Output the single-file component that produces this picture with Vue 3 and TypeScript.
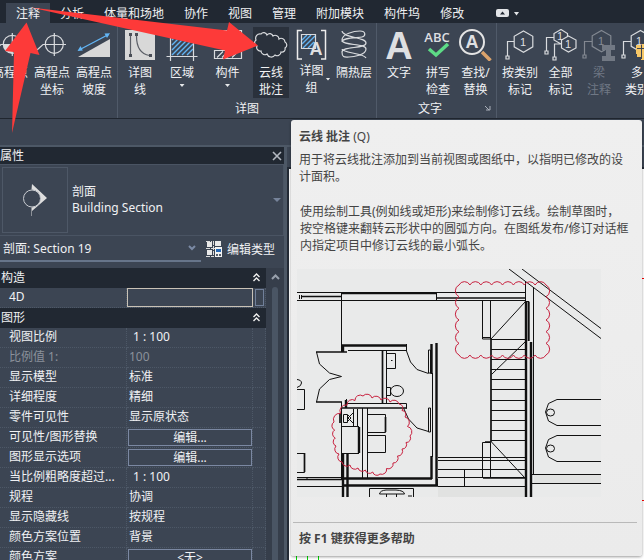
<script setup lang="ts">
import { ref } from 'vue'

interface PropertyRow {
  name: string
  value: string
  kind?: 'text' | 'muted' | 'ratio' | 'button'
}

type Point = [number, number]

const menus: string[] = ['注释', '分析', '体量和场地', '协作', '视图', '管理', '附加模块', '构件坞', '修改']
const activeMenu = ref('注释')
const fourD = ref('')

const rows: PropertyRow[] = [
  { name: '视图比例', value: '1 : 100', kind: 'ratio' },
  { name: '比例值 1:', value: '100', kind: 'muted' },
  { name: '显示模型', value: '标准' },
  { name: '详细程度', value: '精细' },
  { name: '零件可见性', value: '显示原状态' },
  { name: '可见性/图形替换', value: '编辑...', kind: 'button' },
  { name: '图形显示选项', value: '编辑...', kind: 'button' },
  { name: '当比例粗略度超过...', value: '1 : 100', kind: 'ratio' },
  { name: '规程', value: '协调' },
  { name: '显示隐藏线', value: '按规程' },
  { name: '颜色方案位置', value: '背景' },
  { name: '颜色方案', value: '<无>', kind: 'button' },
]

// Clockwise outline turned into a chain of outward bumps.
function revisionCloud(points: Point[], step: number): string {
  let d = `M${points[0][0]} ${points[0][1]}`
  points.forEach(([x1, y1], i) => {
    const [x2, y2] = points[(i + 1) % points.length]
    const length = Math.hypot(x2 - x1, y2 - y1)
    const count = Math.max(1, Math.round(length / step))
    const radius = ((length / count) * 0.56).toFixed(1)
    for (let n = 1; n <= count; n++) {
      const x = (x1 + ((x2 - x1) * n) / count).toFixed(1)
      const y = (y1 + ((y2 - y1) * n) / count).toFixed(1)
      d += `A${radius} ${radius} 0 0 1 ${x} ${y}`
    }
  })
  return d + 'Z'
}

const stairCloud = revisionCloud([[162, 16], [249, 16], [249, 86], [162, 86]], 11.5)
const roomCloud = revisionCloud(
  [[66, 127], [84, 131], [102, 135], [108, 148], [113, 167], [105, 180], [96, 194], [83, 205], [61, 199], [45, 193], [39, 177], [37, 153], [50, 136]],
  9,
)
const cloudIcon = revisionCloud(
  [[3, 11], [8, 5], [14, 6], [20, 7], [26, 10], [32, 13], [32, 19], [28, 23], [22, 26], [14, 25], [8, 22], [4, 17]],
  9,
)
const treads: number[] = [70, 80, 90, 100, 110, 120, 131, 141, 151, 161, 171]
</script>

<template>
  <div class="app">
    <nav class="menubar">
      <button
        v-for="menu in menus"
        :key="menu"
        type="button"
        class="menu"
        :class="{ active: menu === activeMenu }"
        @click="activeMenu = menu"
      >{{ menu }}</button>
      <button type="button" class="collapse" aria-label="最小化功能区">
        <svg width="24" height="10" viewBox="0 0 24 10">
          <rect x="0" y="1" width="13" height="8" rx="2" fill="#e3e5e8" />
          <path d="M4 6.500h5L6.500 3.500z" fill="#212832" />
          <path d="M18 4h5l-2.500 3.500z" fill="#e3e5e8" />
        </svg>
      </button>
    </nav>

    <header class="ribbon">
      <section class="group elevation">
        <div class="tools">
          <button type="button" class="tool w42">
            <svg class="icon" viewBox="0 0 36 32">
              <path d="M20.300 15.300V24.300A9 9 0 0 1 11.300 15.300z" fill="#dcdcdc" />
              <path class="ln" d="M3 21l6-5.500h23M20.300 4v23" /><circle class="ln" cx="20.300" cy="15.300" r="9" />
            </svg>
            <span>高程点</span>
          </button>
          <button type="button" class="tool w42">
            <svg class="icon" viewBox="0 0 36 32">
              <path class="ln" d="M3 21l6-5.500h23M20.300 4v23" /><circle class="ln" cx="20.300" cy="15.300" r="9" />
            </svg>
            <span>高程点<br />坐标</span>
          </button>
          <button type="button" class="tool w42">
            <svg class="icon" viewBox="0 0 36 32">
              <path d="M2 28L34 10V28z" fill="#d8d8d8" />
              <path d="M3 21L32.500 5.500" stroke="#62b5f5" stroke-width="1.400" />
              <path d="M1.500 22l3-5 2.300 4.600zM34 4.300l-5.500.3 2.500 4.400z" fill="#62b5f5" />
            </svg>
            <span>高程点<br />坡度</span>
          </button>
        </div>
      </section>

      <section class="group detail">
        <div class="tools">
          <button type="button" class="tool w44">
            <svg class="icon" viewBox="0 0 36 32">
              <path d="M3 1h30v30H3z" fill="#d8d8d8" />
              <path d="M8.500 7v18M14.500 7c0 11 4 18 13 19.500" fill="none" stroke="#5a5e66" stroke-width="1.200" />
              <path d="M7 4h3v3H7zM13 4h3v3h-3zM7 25h3v3H7zM27 25h3v3h-3z" fill="#4a4e57" />
            </svg>
            <span>详图<br />线</span>
          </button>
          <button type="button" class="tool w40">
            <svg class="icon" viewBox="0 0 36 32">
              <path d="M8 11l4-4M8 16l9-9M8 21L22 7M8 26L27 7M13 26L29 10M18 26l11-11M23 26l6-6" stroke="#62b5f5" stroke-width="1.400" />
              <path class="ln" d="M6.500 2v30M29.500 2v30M2.500 27.500h31M2.500 5.500h31" />
            </svg>
            <span>区域</span><i class="caret"></i>
          </button>
          <button type="button" class="tool w51">
            <svg class="icon" viewBox="0 0 36 32">
              <path class="ln" d="M4.500 21.500h27v8h-27zM4.500 1.500h27v8h-27zM7 28.500l6-6M12 28.500l6-6M17 28.500l6-6M22 28.500l6-6" />
            </svg>
            <span>构件</span><i class="caret"></i>
          </button>
          <button type="button" class="tool w36 hover">
            <svg class="icon" viewBox="0 0 36 32"><path class="ln" :d="cloudIcon" /></svg>
            <span>云线<br />批注</span>
          </button>
          <button type="button" class="tool w45">
            <svg class="icon" viewBox="0 0 36 32">
              <path d="M8 11l5-5M8 15l9-9M9 19L21 7M14 19l6-6" stroke="#62b5f5" stroke-width="1.400" />
              <path class="ln" d="M7.500 5.500h14v14h-14z" />
              <path d="M8 1.500H3.500v28.500H8M27 1.500h4.500v28.500H27" fill="none" stroke="#ececec" stroke-width="1.500" />
              <text x="22" y="26" class="glyph a-small">A</text>
            </svg>
            <span class="with-caret"><span>详图<br />组</span><i class="caret"></i></span>
          </button>
          <button type="button" class="tool w40">
            <svg class="icon" viewBox="0 0 36 32">
              <path class="ln" d="M6 2C7 9 30 8 30 14S6 17 6 23S9 28 13 28S30 26 30 20S6 17 6 11S18 2 24 2S30 7 26 8S6 8 6 13M6 20C6 24 28 24 30 29" />
            </svg>
            <span>隔热层</span>
          </button>
        </div>
        <h2>详图</h2>
      </section>

      <section class="group text">
        <div class="tools">
          <button type="button" class="tool w44">
            <svg class="icon" viewBox="0 0 36 32"><text x="18" y="30" class="glyph a-large">A</text></svg>
            <span>文字</span>
          </button>
          <button type="button" class="tool w34">
            <svg class="icon" viewBox="0 0 36 32">
              <text x="17" y="13" class="glyph abc">ABC</text>
              <path d="M9 20l7 6L28 15" fill="none" stroke="#5ddb86" stroke-width="3.500" />
            </svg>
            <span>拼写<br />检查</span>
          </button>
          <button type="button" class="tool w41">
            <svg class="icon" viewBox="0 0 36 32">
              <path d="M24 23l8.500 8.500" stroke="#dca36c" stroke-width="3.500" />
              <circle cx="14" cy="13" r="12" fill="none" stroke="#e4e4e4" stroke-width="2" />
              <text x="14" y="19" class="glyph a-small">A</text>
            </svg>
            <span>查找/<br />替换</span>
          </button>
        </div>
        <h2>
          <span>文字</span>
          <svg width="6" height="6" viewBox="0 0 6 6"><path d="M0 1l4 4M5 1v4H1" fill="none" stroke="#aab0ba" /></svg>
        </h2>
      </section>

      <section class="group tag">
        <div class="tools">
          <button type="button" class="tool w42">
            <svg class="icon" viewBox="0 0 36 32">
              <path class="ln" d="M21.500 2l9.300 5.300v10.500l-9.300 5.400-9.300-5.400V7.300zM12 12.500H5.500V27M4 27h3v3H4z" />
              <text x="21" y="17" class="glyph one">1</text>
            </svg>
            <span>按类别<br />标记</span>
          </button>
          <button type="button" class="tool w39">
            <svg class="icon" viewBox="0 0 36 32">
              <path class="ln" d="M18 15l-7-4V4.500l7-4 6.500 4V7M25.500 7l7.500 4v8l-7.500 4-7-4v-8zM11 8.500H3.500V22M2 22h3v3H2zM18 15h-6.500v13M10 28h3v3h-3z" />
              <text x="17" y="11" class="glyph one">1</text><text x="25" y="19" class="glyph one">1</text>
            </svg>
            <span>全部<br />标记</span>
          </button>
          <button type="button" class="tool w38 disabled" disabled>
            <svg class="icon" viewBox="0 0 36 32">
              <path class="ln" d="M20.500 1.500l9.300 5.300v10.500l-9.300 5.400-9.300-5.400V6.800zM11 12.500H3.500V26M2 26h3v3H2z" />
              <text x="20" y="16" class="glyph one">1</text>
              <path d="M21 16h13v5h-4v6h4v5H21v-5h4v-6h-4z" fill="#b4b9c1" />
            </svg>
            <span>梁<br />注释</span>
          </button>
          <button type="button" class="tool w38">
            <svg class="icon" viewBox="0 0 36 32">
              <path class="ln" d="M21.500 1.500l9.300 5.300v10.500l-9.300 5.400-9.300-5.400V6.800zM12 12.500H4.500V26M3 26h3v3H3z" />
              <text x="20" y="16" class="glyph one">1</text>
              <path d="M17 16h5v3h-4v6h-1zM23 15h9v4h-9zM18 20h4v8h-4zM22 20h12v11H22z" fill="#f7c766" />
              <path d="M22.500 20v10M22 19.500h10" stroke="#3c4553" />
            </svg>
            <span>多<br />类别</span>
          </button>
        </div>
      </section>
    </header>
    <div class="options"></div>

    <main class="workspace">
      <aside class="palette">
        <div class="palette-title">
          <span>属性</span>
          <button type="button" aria-label="关闭">
            <svg width="10" height="10" viewBox="0 0 10 10"><path d="M1 1l8 8M9 1L1 9" stroke="#b4b9c1" stroke-width="1.600" /></svg>
          </button>
        </div>

        <button type="button" class="type-selector">
          <span class="preview">
            <svg width="24" height="32" viewBox="0 0 24 32">
              <path d="M9 0L24 14L9 27V32H8.500V23.500A9 9 0 0 0 8.500 5.500z" fill="#dedede" />
              <circle cx="9" cy="14.500" r="8.500" fill="#3c4553" stroke="#c9ccd1" />
            </svg>
          </span>
          <span class="type-name">剖面<br />Building Section</span>
          <svg width="8" height="4" viewBox="0 0 8 4"><path d="M0 0h8L4 4z" fill="#76839a" /></svg>
        </button>

        <div class="instance">
          <div class="picker">
            <select aria-label="实例">
              <option>剖面: Section 19</option>
            </select>
            <svg width="8" height="6" viewBox="0 0 8 6"><path d="M1 1l3 3 3-3" fill="none" stroke="#7b8aa5" stroke-width="2" /></svg>
          </div>
          <button type="button" class="edit-type">
            <svg width="16" height="16" viewBox="0 0 16 16">
              <path d="M1 1h5v5H1zM1 9h5v5H1zM9 0h6v5H9z" fill="#e9e9e9" />
              <path d="M0 7.500h16M7.500 0v16M0 15.500h7M0 .5h6" stroke="#dcdcdc" stroke-dasharray="4 1" />
              <path d="M9 6h7v10H9z" fill="#f2f2f2" />
              <path d="M10 8h5v3h-5z" fill="#2669b5" />
              <path d="M10 13h2v2h-2zM13 13h2v2h-2z" fill="#59606c" />
            </svg>
            编辑类型
          </button>
        </div>

        <div class="sheet">
          <table>
            <colgroup><col class="c-name" /><col class="c-value" /><col class="c-link" /></colgroup>
            <tbody>
              <tr class="category">
                <th colspan="3"><div>构造<svg width="7" height="9" viewBox="0 0 7 9"><path d="M.5 4L3.500 1l3 3M.5 8l3-3 3 3" fill="none" stroke="#f0f0f0" stroke-width="1.400" /></svg></div></th>
              </tr>
              <tr>
                <td class="name"><label for="four-d">4D</label></td>
                <td><input id="four-d" v-model="fourD" type="text" /></td>
                <td><button type="button" class="link" aria-label="关联参数"></button></td>
              </tr>
              <tr class="category">
                <th colspan="3"><div>图形<svg width="7" height="9" viewBox="0 0 7 9"><path d="M.5 4L3.500 1l3 3M.5 8l3-3 3 3" fill="none" stroke="#f0f0f0" stroke-width="1.400" /></svg></div></th>
              </tr>
              <tr v-for="row in rows" :key="row.name" :class="row.kind">
                <td class="name">{{ row.name }}</td>
                <td class="value">
                  <button v-if="row.kind === 'button'" type="button" class="edit">{{ row.value }}</button>
                  <template v-else>{{ row.value }}</template>
                </td>
                <td></td>
              </tr>
            </tbody>
          </table>
          <div class="scrollbar">
            <svg width="9" height="6" viewBox="0 0 9 6"><path d="M1 5l3.500-3.500L8 5" fill="none" stroke="#98a0ac" stroke-width="2" /></svg>
            <div class="thumb"></div>
          </div>
        </div>
      </aside>

      <section class="canvas">
        <div class="tabs"></div>
        <div class="sheet-view">
          <i class="red"></i><i class="red"></i>
          <div class="greens"><i></i><i></i><i></i></div>
        </div>
      </section>
    </main>

    <div class="tooltip" role="tooltip">
      <h3>云线 批注 <span>(Q)</span></h3>
      <p>用于将云线批注添加到当前视图或图纸中，以指明已修改的设<br />计面积。</p>
      <p class="more">使用绘制工具(例如线或矩形)来绘制修订云线。绘制草图时，<br />按空格键来翻转云形状中的圆弧方向。在图纸发布/修订对话框<br />内指定项目中修订云线的最小弧长。</p>
      <svg class="plan" width="304" height="228" viewBox="0 0 304 228">
        <path d="M0 0H304V228H0z" fill="#e9eaea" />
        <path d="M141 218h87v10h-87zM237 206h67v8h-67z" fill="#e1e2e1" />
        <g class="thin">
          <path d="M0 23.500H228M0 31.500H228M44.500 23V83M139.500 24V31M2.500 26v4M4.500 26v4M51 81.500H110M109.500 75V82M141 188.500H228M141 191.500H228M141 200.500H228M141 208.500H228M141 217.500H228M167.500 200V217" />
          <path d="M19.500 83L22.500 95L32.500 104L44.500 107.500L32.500 110.500L22.500 120L19.500 133M0 110.500Q4.500 111 4.500 114T0 118.500" />
          <path d="M89.500 81V134M89.500 84.500h9v15h-9zM94 91.500h1.500M89.500 118.500h4v8h-4zM109.500 82L113.500 93L120 100.500L131.500 104.500M131.500 81h2v23h-2zM106.500 139L111.500 150L120 159L131.500 162.500M131.500 139h2v24h-2z" />
          <ellipse cx="100" cy="122" rx="6.500" ry="5.500" />
          <path d="M49.500 130V134.500H109.500V139.500M44.500 133V210M65.500 139V210M70.500 139V210M45 157.500H62M45 184.500H62M56.500 140v17M60.500 140v17M0 120.500H7.500V140.500H0M0 184.500H7.500V203.500H0M70.500 145.500h18v18h-18zM70.500 166.500h18v17h-18zM0 208.500H45M0 217.500H45M10 208v3" />
          <path d="M72.500 228V219.500H116.500V228M82.500 225Q83 221.500 89 221H99Q107 221.500 107.500 225zM89.500 225v3M99.500 225v3M111 227h4" />
          <path d="M185.500 31.500h8v38.500h-8zM185.500 68.500h8M185.500 173.500h8v35h-8zM194 70L228 33M194.500 105.500L228 73M194.500 173L228 209M236.500 19V205M228.500 13V32M228 32.500h4V72" />
          <path v-for="y in treads" :key="y" :d="`M194 ${y}.5H228`" />
          <path d="M212 0L304 69.500M225 0L304 59.500M233 205.500H304M233 214.500H304" />
          <path d="M304 130.500H260L251.500 134.500L248.500 143L251.500 152L260 156.500H304M304 166.500H260L251.500 170.500L248.500 179L251.500 188L260 192.500H304" />
          <ellipse cx="253.500" cy="143.500" rx="4" ry="3.500" /><ellipse cx="253.500" cy="179.500" rx="4" ry="3.500" />
          <path d="M46.500 145.500h4v8h-4zM56.500 143v11M56 144L51 149L56 154M51 146l3 3-3 3" />
        </g>
        <g class="thick">
          <path d="M45 24.500H140M5 27.500H45M140 29H228M19 83H50M19 133H45M45 139H110M85.500 81V134M188 173H194M186 209H228M194 70V173M231.500 33V72M7.500 184V203M88.500 148V163M0 210.500H45M140 210V217M43 144V154" />
        </g>
        <g class="heavy">
          <path d="M45 76.500H110M46 76V83M134.500 75V105M134.500 187V210M139.500 74V217M45 209.500H135M45 216.500H141M46 184V228M50.500 184V228M62 158V184M229 32V228M234 73V228M49 131V139" />
        </g>
        <path d="M135.500 104V188" stroke="#111" />
        <path class="cloud" :d="stairCloud" />
        <path class="cloud" :d="roomCloud" />
      </svg>
      <footer>按 F1 键获得更多帮助</footer>
    </div>

    <svg class="pointers" width="260" height="134" viewBox="0 0 260 134" aria-hidden="true">
      <path d="M26.500 22.500L39.500 55L30.500 53L12 133L14 52L5 51z" fill="#fd3a39" />
      <path d="M31 7.500L227 30.500L229 22L258 45.500L223 59.500L225 50.500z" fill="#fd3a39" />
    </svg>
  </div>
</template>

<style>
body {
  overflow: hidden;
  background: #3c4553;
}
</style>

<style scoped>
.app {
  position: relative;
  display: flex;
  flex-direction: column;
  height: 100vh;
  overflow: hidden;
  background: #3c4553;
  color: #f0f1f3;
  font: 12px/17px "Noto Sans", "Noto Sans CJK SC", sans-serif;
}
.app *,
.app *::before {
  box-sizing: border-box;
}
button,
input,
select {
  margin: 0;
  padding: 0;
  border: 0;
  background: none;
  color: inherit;
  font: inherit;
}
svg {
  display: block;
  flex: none;
}

.menubar {
  display: flex;
  align-items: flex-end;
  flex: none;
  height: 23px;
  padding-left: 6px;
  background: #212832;
}
.menu {
  height: 20px;
  padding: 0 10px;
  white-space: nowrap;
}
.menu.active {
  background: #3c4553;
}
.collapse {
  height: 20px;
  margin-left: 22px;
}

.ribbon {
  display: flex;
  flex: none;
  height: 96px;
  border-bottom: 1px solid #20262f;
}
.group {
  display: flex;
  flex: none;
  flex-direction: column;
  padding-top: 4px;
}
.group + .group {
  border-left: 1px solid #505a69;
}
.elevation {
  width: 117px;
  overflow: hidden;
}
.elevation .tools {
  justify-content: flex-end;
  padding-right: 2px;
}
.detail {
  width: 259px;
}
.text {
  width: 120px;
}
.tag {
  flex: 1;
  min-width: 0;
  overflow: hidden;
}
.tag .tools {
  padding-left: 2px;
}
.tools {
  display: flex;
  height: 71px;
}
.tool {
  display: flex;
  flex: none;
  flex-direction: column;
  align-items: center;
  padding-top: 2px;
  white-space: nowrap;
  text-align: center;
}
.tool > span {
  margin-top: 3px;
}
.tool.hover {
  background: #2a313c;
}
.tool.disabled {
  color: #707885;
}
.tool.disabled .icon {
  opacity: 0.45;
}
.w34 { width: 34px; }
.w36 { width: 36px; }
.w38 { width: 38px; }
.w39 { width: 39px; }
.w40 { width: 40px; }
.w41 { width: 41px; }
.w42 { width: 42px; }
.w44 { width: 44px; }
.w45 { width: 45px; }
.w51 { width: 51px; }
.icon {
  width: 36px;
  height: 32px;
}
.ln {
  fill: none;
  stroke: #d9dbde;
  stroke-width: 1.2;
}
.glyph {
  fill: #dedfe1;
  font-family: "Liberation Sans", sans-serif;
  text-anchor: middle;
}
.a-large { font-size: 38px; font-weight: 700; }
.a-small { font-size: 18px; font-weight: 700; }
.abc { font-family: "Open Sans", sans-serif; font-size: 13px; font-weight: 600; }
.one { font-size: 11px; }
.caret {
  width: 5px;
  height: 3px;
  margin-top: 3px;
  background: #e6e8ea;
  clip-path: polygon(0 0, 100% 0, 50% 100%);
}
.tool > .with-caret {
  display: grid;
  grid-template-columns: 1fr auto 1fr;
  align-items: center;
  width: 100%;
  margin-top: 1px;
}
.with-caret > span {
  grid-column: 2;
}
.with-caret .caret {
  margin: 0 0 0 2px;
}
h2 {
  display: flex;
  align-items: center;
  justify-content: center;
  height: 20px;
  margin: 0;
  font-size: 12px;
  font-weight: 400;
}
.text h2 {
  padding: 0 5px 0 41px;
  justify-content: space-between;
}
.options {
  flex: none;
  height: 26px;
}

.workspace {
  display: flex;
  flex: 1;
  min-height: 0;
  border-top: 2px solid #4d5866;
}
.palette {
  display: flex;
  flex: none;
  flex-direction: column;
  width: 287px;
  border-right: 3px solid #4d5866;
}
.palette-title {
  display: flex;
  flex: none;
  align-items: center;
  justify-content: space-between;
  height: 17px;
  padding-right: 2px;
  background: #212832;
}
.type-selector {
  display: flex;
  flex: none;
  align-items: center;
  height: 72px;
  padding: 2px;
  border: solid #4a5463;
  border-width: 1px 1px 1px 0;
  text-align: left;
}
.preview {
  display: grid;
  place-items: center;
  width: 66px;
  height: 66px;
  margin-right: 4px;
  border: 1px solid #4e5867;
}
.type-name {
  flex: 1;
  line-height: 16px;
}
.instance {
  display: flex;
  flex: none;
  height: 32px;
}
.picker {
  display: grid;
  align-items: center;
  width: 201px;
  height: 26px;
  border-bottom: 2px solid #67758a;
}
.picker > * {
  grid-area: 1 / 1;
}
.picker svg {
  justify-self: end;
  margin-right: 5px;
}
.picker select {
  height: 24px;
  padding-left: 3px;
  appearance: none;
}
.edit-type {
  display: flex;
  align-items: center;
  gap: 5px;
  height: 26px;
  margin-left: 5px;
}

.sheet {
  display: flex;
  flex: 1;
  min-height: 0;
  overflow: hidden;
}
table {
  flex: none;
  align-self: flex-start;
  width: 266px;
  border-spacing: 0;
  table-layout: fixed;
}
.c-name { width: 127px; }
.c-value { width: 126px; }
.c-link { width: 13px; }
th,
td {
  height: 20px;
  padding: 0;
  line-height: 17px;
  text-align: left;
  vertical-align: middle;
  white-space: nowrap;
}
td {
  border: dotted #4d5867;
  border-width: 0 1px 1px 0;
}
.category th {
  background: #212832;
  font-weight: 400;
}
.category div {
  display: flex;
  align-items: center;
  justify-content: space-between;
  padding: 0 6px 1px 1px;
}
.name {
  padding: 0 0 2px 9px;
}
.value {
  padding: 0 0 2px 2px;
}
.ratio .value {
  padding-left: 6px;
}
.button .value {
  padding: 0 0 0 1px;
}
.muted td {
  color: #8b919b;
}
input {
  display: block;
  width: 126px;
  height: 19px;
  border: 1px solid #c9c2b6;
}
.link {
  display: block;
  width: 9px;
  height: 17px;
  margin-left: 2px;
  border: 1px solid #71809a;
}
.edit {
  display: block;
  width: 124px;
  height: 17px;
  border: 1px solid #7b88a2;
  line-height: 15px;
}
.scrollbar {
  display: flex;
  flex: 1;
  flex-direction: column;
  align-items: center;
  padding-top: 6px;
  background: #363e4b;
}
.thumb {
  flex: 1;
  width: 6px;
  margin-top: 7px;
  border-radius: 3px 3px 0 0;
  background: #4a5564;
}

.canvas {
  display: flex;
  flex: 1;
  flex-direction: column;
  min-width: 0;
}
.tabs {
  height: 20px;
}
.sheet-view {
  display: flex;
  flex: 1;
  flex-direction: column;
  align-items: flex-end;
  border: solid #232a35;
  border-width: 2px 0 0 2px;
  background: #fff;
}
.red {
  width: 2px;
  height: 1px;
  margin-top: 109px;
  background: #f00;
}
.red + .red {
  margin-top: 221px;
}
.greens {
  display: flex;
  flex: 1;
  gap: 10px;
  align-self: flex-start;
  padding-left: 7px;
}
.greens i {
  width: 1px;
  background: #0d0;
}

.tooltip {
  position: absolute;
  top: 120px;
  right: 2px;
  left: 291px;
  padding: 8px 6px 9px;
  border-radius: 3px;
  background: linear-gradient(#efefef, #ebebeb);
  box-shadow: 0 1px 3px rgba(0, 0, 0, 0.4);
  color: #444;
}
h3 {
  margin: 0 0 6px 2px;
  font-size: 12px;
  font-weight: 700;
}
h3 span {
  font-weight: 400;
}
p {
  margin: 0 0 0 2px;
  white-space: nowrap;
}
.more {
  margin: 18px 0 15px 3px;
}
.tooltip footer {
  margin: 25px -1px 0 -4px;
  padding: 7px 6px 0;
  border-top: 1px solid #b9b9b9;
  font-weight: 700;
}
.thin,
.thick,
.heavy {
  fill: none;
  stroke: #111;
}
.thin { stroke-width: 1; }
.thick { stroke-width: 1.7; }
.heavy { stroke-width: 2.4; }
.cloud {
  fill: none;
  stroke: #c8213f;
}
.pointers {
  position: absolute;
  top: 0;
  left: 0;
  pointer-events: none;
}
</style>
